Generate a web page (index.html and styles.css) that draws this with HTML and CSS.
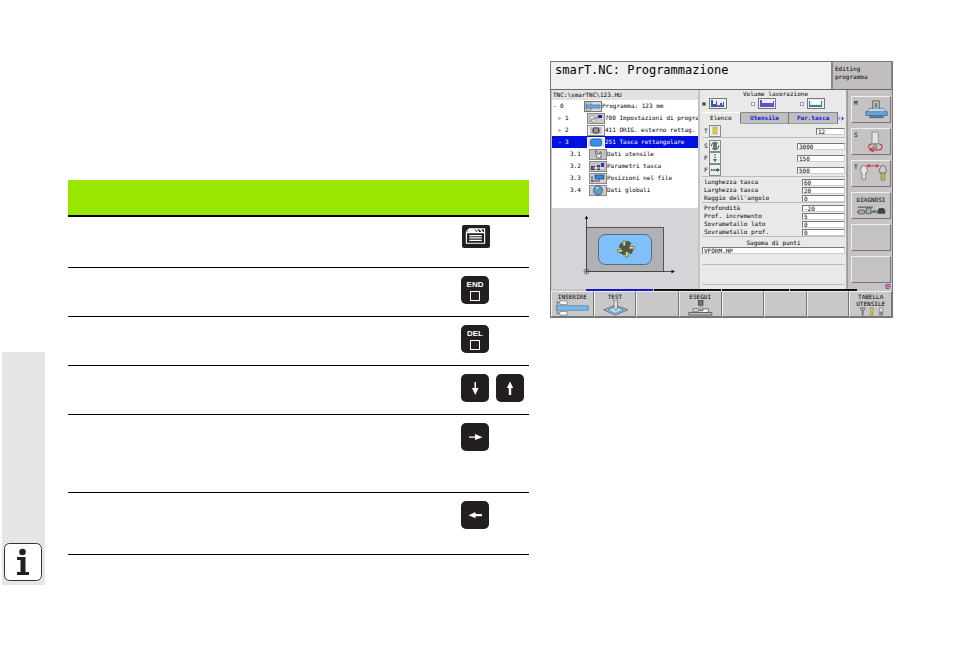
FILE: index.html
```html
<!DOCTYPE html>
<html lang="it">

<head>
    <meta charset="UTF-8">
    <meta name="viewport" content="width=device-width, initial-scale=1.0">
    <title>smarT.NC: Programmazione</title>
    <link rel="stylesheet" href="styles.css">
</head>

<body>
    <div class="page">
        <aside class="side">
            <svg class="info" viewBox="0 0 38 38">
                <rect x="0.5" y="0.5" width="37" height="37" rx="5" fill="#fff" stroke="#333" />
                <circle cx="18.500" cy="9" r="3.300" fill="#231f20" />
                <path d="M13 14h8.500v15h3.500v3H13v-3h3.500V17H13z" fill="#231f20" />
            </svg>
        </aside>

        <!-- keys -->
        <table class="keys">
            <thead>
                <tr>
                    <th></th>
                    <th class="key-col"></th>
                </tr>
            </thead>
            <tbody>
                <tr class="row-first">
                    <td></td>
                    <td>
                        <button class="key key-menu" aria-label="Menu">
                            <svg viewBox="0 0 28 24">
                                <path d="M4 7l3-3h16v4M4 7v12h19V8H4" fill="none" stroke="#fff" stroke-width="1.200" />
                                <path d="M7 4h5l3 4H5z" fill="#fff" />
                                <path d="M14 4l3 4M18 4l3 4" stroke="#fff" stroke-width="1.500" />
                                <path d="M7 11h13M7 13.500h13M7 16h13" stroke="#fff" stroke-width="1.300" />
                            </svg>
                        </button>
                    </td>
                </tr>
                <tr>
                    <td></td>
                    <td><button class="key">END<span class="square"></span></button></td>
                </tr>
                <tr>
                    <td></td>
                    <td><button class="key">DEL<span class="square"></span></button></td>
                </tr>
                <tr>
                    <td></td>
                    <td>
                        <div class="key-pair">
                            <button class="key" aria-label="Freccia in basso">
                                <svg viewBox="0 0 28 28"><path d="M13.500 8h1.500v6h2.500l-3.200 7-3.300-7h2.500z" fill="#fff" /></svg>
                            </button>
                            <button class="key" aria-label="Freccia in alto">
                                <svg viewBox="0 0 28 28"><path d="M12.800 21h2.400v-7h2L14 7.500 10.800 14h2z" fill="#fff" /></svg>
                            </button>
                        </div>
                    </td>
                </tr>
                <tr class="row-tall">
                    <td></td>
                    <td>
                        <button class="key" aria-label="Freccia a destra">
                            <svg viewBox="0 0 28 28"><path d="M8 13.500h6V11l7.500 3.200L14 17v-2.200H8z" fill="#fff" /></svg>
                        </button>
                    </td>
                </tr>
                <tr class="row-last">
                    <td></td>
                    <td>
                        <button class="key" aria-label="Freccia a sinistra">
                            <svg viewBox="0 0 28 28"><path d="M21 13h-6.500v-2L7.500 14.200l7 3V15.300H21z" fill="#fff" /></svg>
                        </button>
                    </td>
                </tr>
            </tbody>
        </table>

        <!-- control screen -->
        <main class="screen">
            <header class="top">
                <h1>smarT.NC: Programmazione</h1>
                <div class="mode">Editing<br>programma</div>
            </header>

            <div class="middle">
                <section class="program">
                    <div class="path">TNC:\smarTNC\123.HU</div>
                    <ul class="tree">
                        <li>
                            <span class="exp">-</span><span class="num">0</span>
                            <svg class="icon" viewBox="0 0 18 11">
                                <rect x="0.500" y="0.500" width="17" height="10" fill="#d8d8d8" stroke="#777" />
                                <path d="M2 2h5v2H2zM2 7h5v2H2z" fill="#fff" stroke="#456" stroke-width="0.600" />
                                <path d="M2 4h14v3H2z" fill="#6ab4ee" stroke="#357" stroke-width="0.600" />
                            </svg>
                            <span class="name">Programma: 123 mm</span>
                        </li>
                        <li class="level1">
                            <span class="exp">▹</span><span class="num">1</span>
                            <svg class="icon" viewBox="0 0 18 11">
                                <rect x="0.500" y="0.500" width="17" height="10" fill="#c8c8c8" stroke="#888" />
                                <path d="M2 8h4V5h5V3" fill="none" stroke="#777" stroke-width="0.700" />
                                <path d="M3 3h4v3H3zM5 6h4v3H5z" fill="#eee" stroke="#777" stroke-width="0.500" />
                                <rect x="11" y="2" width="4" height="3" fill="#2222b0" />
                            </svg>
                            <span class="name">700 Impostazioni di programma</span>
                        </li>
                        <li class="level1">
                            <span class="exp">▹</span><span class="num">2</span>
                            <svg class="icon" viewBox="0 0 18 11">
                                <rect x="0.500" y="0.500" width="17" height="10" fill="#eee" stroke="#888" />
                                <rect x="3" y="2" width="12" height="7" fill="#c4c4c4" />
                                <rect x="6" y="3" width="6" height="5" rx="1.500" fill="#777" stroke="#222" />
                                <path d="M8 3v5M10 3v5" stroke="#ddd" stroke-width="0.600" />
                            </svg>
                            <span class="name">411 ORIG. esterno rettag.</span>
                        </li>
                        <li class="level1 selected">
                            <span class="exp">-</span><span class="num">3</span>
                            <svg class="icon" viewBox="0 0 18 11">
                                <rect x="0.500" y="0.500" width="17" height="10" fill="#ddd" stroke="#fff" />
                                <rect x="3.500" y="2" width="11" height="7" rx="2" fill="#2f94f0" stroke="#136" stroke-width="0.600" />
                            </svg>
                            <span class="name">251 Tasca rettangolare</span>
                        </li>
                        <li class="level2">
                            <span class="num">3.1</span>
                            <svg class="icon" viewBox="0 0 18 11">
                                <rect x="0.500" y="0.500" width="17" height="10" fill="#c2c2c2" stroke="#888" />
                                <path d="M6 2h2v3h3V3h1v6H8z" fill="#eee" stroke="#444" stroke-width="0.700" />
                            </svg>
                            <span class="name">Dati utensile</span>
                        </li>
                        <li class="level2">
                            <span class="num">3.2</span>
                            <svg class="icon" viewBox="0 0 18 11">
                                <rect x="0.500" y="0.500" width="17" height="10" fill="#c2c2c2" stroke="#888" />
                                <path d="M2 5h4v4H2zM8 4h3v5H8z" fill="#446" />
                                <path d="M12 2h3v4h-3z" fill="#33c" />
                                <path d="M4 7h11" stroke="#eee" />
                            </svg>
                            <span class="name">Parametri tasca</span>
                        </li>
                        <li class="level2">
                            <span class="num">3.3</span>
                            <svg class="icon" viewBox="0 0 18 11">
                                <rect x="0.500" y="0.500" width="17" height="10" fill="#d0d0d0" stroke="#888" />
                                <rect x="6" y="2" width="9" height="4" fill="#2b8be8" stroke="#136" stroke-width="0.600" />
                                <path d="M3 3v6M2 8h7M10 6v3" stroke="#335" stroke-width="0.900" />
                            </svg>
                            <span class="name">Posizioni nel file</span>
                        </li>
                        <li class="level2">
                            <span class="num">3.4</span>
                            <svg class="icon" viewBox="0 0 18 11">
                                <rect x="0.500" y="0.500" width="17" height="10" fill="#ccc" stroke="#888" />
                                <circle cx="9" cy="5.500" r="4.600" fill="#5a92dc" stroke="#236" stroke-width="0.500" />
                                <path d="M6 3l3-1 1 2-2 2-2-1zM10 6l3-1-1 3-2 1z" fill="#5cba68" />
                                <path d="M7 2l3 0-2 2z" fill="#e8f4ff" />
                            </svg>
                            <span class="name">Dati globali</span>
                        </li>
                    </ul>
                    <div class="graphic">
                        <svg viewBox="0 0 146 80">
                            <rect x="34.500" y="19.500" width="77" height="44" fill="#b2b0b2" stroke="#555" />
                            <rect x="46.500" y="26.500" width="53" height="30" rx="7" fill="#82c0fa" stroke="#456" stroke-width="0.800" />
                            <path d="M34.500 65V9M33 63.500h88" stroke="#444" stroke-width="0.900" />
                            <path d="M34.500 7.500l1.700 3.500h-3.400zM123 63.500l-3.500-1.700v3.400z" fill="#111" />
                            <circle cx="34.500" cy="63.500" r="2.500" fill="none" stroke="#555" stroke-width="0.700" />
                            <g stroke="#333" stroke-width="0.500">
                                <path d="M73 38l2-5 4 2-2 4 4 3-2 4-4-3-3 4-5-3 3-3-3-2 2-4z" fill="#555" />
                                <path d="M71 33h2.500v5H71zM77 38.500h5V41h-5zM73.500 43.500H76V49h-2.500zM65.500 41.500h5V44h-5z" fill="#f2e53c" />
                            </g>
                        </svg>
                    </div>
                </section>

                <form class="form">
                    <fieldset class="volume">
                        <legend>Volume lavorazione</legend>
                        <label><input type="radio" name="volume" aria-label="Volume 1" checked>
                            <svg class="icon" viewBox="0 0 18 11">
                                <rect x="0.500" y="0.500" width="17" height="10" fill="#eee" stroke="#777" />
                                <path d="M2 2h2v4h3V3h1v4h3V5h2v2h1V4h1v5H2z" fill="#2d6098" />
                                <path d="M7 7h5v2H7z" fill="#6b4dcc" />
                            </svg>
                        </label>
                        <label><input type="radio" name="volume" aria-label="Volume 2">
                            <svg class="icon" viewBox="0 0 18 11">
                                <rect x="0.500" y="0.500" width="17" height="10" fill="#eee" stroke="#777" />
                                <path d="M2 2h2v3h11V3h1v6H2z" fill="#6050cf" />
                            </svg>
                        </label>
                        <label><input type="radio" name="volume" aria-label="Volume 3">
                            <svg class="icon" viewBox="0 0 18 11">
                                <rect x="0.500" y="0.500" width="17" height="10" fill="#eee" stroke="#777" />
                                <path d="M2 3h1v4h11V3h1v6H2z" fill="#208c98" />
                                <path d="M5 2h8v4H5z" fill="#fff" />
                            </svg>
                        </label>
                    </fieldset>

                    <div class="tabs">
                        <button type="button" class="tab active">Elenco</button>
                        <button type="button" class="tab">Utensile</button>
                        <button type="button" class="tab">Par.tasca</button>
                        <span class="arrows">
                            <svg viewBox="0 0 8 6"><path d="M3 0v6L0 3z" fill="#8a90d8" /><path d="M5 0v6l3-3z" fill="#2a35d8" /></svg>
                        </span>
                    </div>

                    <div class="group">
                        <div class="line">
                            <label for="tool">T</label>
                            <svg class="pic" viewBox="0 0 12 12">
                                <rect x="0.500" y="0.500" width="11" height="11" fill="#eee" stroke="#888" />
                                <rect x="4" y="2" width="4" height="7" fill="#e2cb40" stroke="#986" stroke-width="0.500" />
                            </svg>
                            <input class="value short" id="tool" type="text" value="12">
                        </div>
                    </div>
                    <div class="group feeds">
                        <div class="line">
                            <label for="speed">S</label>
                            <svg class="pic" viewBox="0 0 12 12">
                                <rect x="0.500" y="0.500" width="11" height="11" fill="#eee" stroke="#888" />
                                <circle cx="6" cy="6" r="3.700" fill="none" stroke="#187838" stroke-dasharray="9 2" />
                                <path d="M4.500 3.500h3v5h-3z" fill="#777" stroke="#333" stroke-width="0.500" />
                            </svg>
                            <input class="value long" id="speed" type="text" value="3000">
                        </div>
                        <div class="line">
                            <label for="feed-z">F</label>
                            <svg class="pic" viewBox="0 0 12 12">
                                <rect x="0.500" y="0.500" width="11" height="11" fill="#eee" stroke="#888" />
                                <path d="M6 2v5" stroke="#187838" stroke-dasharray="1.500 1" stroke-width="1.200" />
                                <path d="M4 7h4L6 10z" fill="#187838" />
                            </svg>
                            <input class="value long" id="feed-z" type="text" value="150">
                        </div>
                        <div class="line">
                            <label for="feed">F</label>
                            <svg class="pic" viewBox="0 0 12 12">
                                <rect x="0.500" y="0.500" width="11" height="11" fill="#eee" stroke="#888" />
                                <path d="M2 6h6" stroke="#187838" stroke-dasharray="1.500 0.800" stroke-width="1.800" />
                                <path d="M8 4v4l3-2z" fill="#187838" />
                            </svg>
                            <input class="value long" id="feed" type="text" value="500">
                        </div>
                    </div>
                    <div class="group">
                        <div class="field"><label for="length">lunghezza tasca</label><input class="value" id="length" type="text" value="60"></div>
                        <div class="field"><label for="width">Larghezza tasca</label><input class="value" id="width" type="text" value="20"></div>
                        <div class="field"><label for="radius">Raggio dell'angolo</label><input class="value" id="radius" type="text" value="0"></div>
                    </div>
                    <div class="group">
                        <div class="field"><label for="depth">Profondità</label><input class="value" id="depth" type="text" value="-20"></div>
                        <div class="field"><label for="step">Prof. incremento</label><input class="value" id="step" type="text" value="5"></div>
                        <div class="field"><label for="side">Sovrametallo lato</label><input class="value" id="side" type="text" value="0"></div>
                        <div class="field"><label for="bottom">Sovrametallo prof.</label><input class="value" id="bottom" type="text" value="0"></div>
                    </div>
                    <div class="group points">
                        <label for="points">Sagoma di punti</label>
                        <input class="value full" id="points" type="text" value="VFORM.HP">
                    </div>
                    <div class="group rest"></div>
                </form>

                <nav class="modes">
                    <button class="mode-key">
                        <span class="letter">M</span>
                        <svg viewBox="0 0 40 27">
                            <path d="M21 4h7v10h-7z" fill="#ddd" stroke="#444" />
                            <path d="M23 6h3v5h-3z" fill="#777" />
                            <path d="M15 15l3-3h14l3 3v5H15z" fill="#b9dcf5" stroke="#456" stroke-width="0.700" />
                            <path d="M13 16h24v4H13z" fill="#69a9e2" stroke="#357" stroke-width="0.700" />
                            <path d="M17 22h16" stroke="#567" stroke-width="2" />
                        </svg>
                    </button>
                    <button class="mode-key">
                        <span class="letter">S</span>
                        <svg viewBox="0 0 40 27">
                            <path d="M20 3h7v13h-7z" fill="#e2e2e2" stroke="#777" stroke-width="0.800" />
                            <path d="M22 16h3v6h-3z" fill="#aaa" stroke="#555" stroke-width="0.600" />
                            <path d="M20 16c-5 1-5 6 1 7h6c6-1 5-6 1-7M21 20l-3 3 4 2" fill="none" stroke="#c83232" stroke-width="1.200" />
                        </svg>
                    </button>
                    <button class="mode-key">
                        <span class="letter">T</span>
                        <svg viewBox="0 0 40 27">
                            <path d="M9 5h4l2 5-1 3h-1v7h-4v-7H8l-1-3z" fill="#e5e5e5" stroke="#666" stroke-width="0.800" />
                            <path d="M30 5h4l2 5-1 3h-6l-1-3z" fill="#ccc" stroke="#555" stroke-width="0.800" />
                            <path d="M30 13h4v8h-4z" fill="#c8b84c" stroke="#665" stroke-width="0.600" />
                            <path d="M15 5h11" stroke="#e02020" />
                            <path d="M17 3v4l-3-2zM25 3v4l3-2z" fill="#e02020" />
                        </svg>
                    </button>
                    <button class="mode-key diagnosis">
                        <span>DIAGNOSI</span>
                        <svg viewBox="0 0 40 12">
                            <path d="M6 3h16M5 8h22" stroke="#444" />
                            <path d="M7 6h6v4H7zM15 4h5v6h-5z" fill="#aaa" stroke="#444" stroke-width="0.700" />
                            <path d="M22 6h3v3h-3z" fill="#477f99" />
                            <path d="M27 10V6l2-2h4l2 2v4z" fill="#444" />
                        </svg>
                    </button>
                    <button class="mode-key" aria-label="Libero"></button>
                    <button class="mode-key" aria-label="Libero"></button>
                    <svg class="mark" viewBox="0 0 6 5"><path d="M1 0h4l1 2-2 3H1L0 2z" fill="#a33a94" /><path d="M1 1l4 3M5 1L1 4" stroke="#eec" stroke-width="0.600" /></svg>
                </nav>
            </div>

            <footer class="bottom">
                <div class="banks"><span class="bank current"></span><span class="bank"></span><span class="bank"></span><span class="bank"></span></div>
                <div class="softkeys">
                    <button class="softkey">INSERIRE
                        <svg viewBox="0 0 40 18">
                            <path d="M3 1v15M3 3h3M3 9h3M3 15h3" stroke="#555" stroke-width="0.700" />
                            <path d="M6 1h8v4H6zM6 13h8v4H6z" fill="#fff" stroke="#555" stroke-width="0.600" />
                            <path d="M2 6.500h36v5H2z" fill="#74bbf2" stroke="#467" stroke-width="0.600" />
                        </svg>
                    </button>
                    <button class="softkey">TEST
                        <svg viewBox="0 0 40 18">
                            <path d="M7 11l13-5 14 5-14 6z" fill="#8bc4ee" stroke="#456" stroke-width="0.800" />
                            <path d="M12 11l8-3 9 3-9 4z" fill="#bde1f5" stroke="#467" stroke-width="0.600" />
                            <path d="M18.500 0h4v9l-2 3-2-3z" fill="#ddd" stroke="#555" stroke-width="0.700" />
                        </svg>
                    </button>
                    <button class="softkey" aria-label="Libero"></button>
                    <button class="softkey">ESEGUI
                        <svg viewBox="0 0 40 18">
                            <path d="M18 0h5v6h-5z" fill="#777" stroke="#444" />
                            <path d="M20 6h2v5h-2z" fill="#ddd" stroke="#555" stroke-width="0.500" />
                            <path d="M12 10h6v2h5v-2h6v4H12z" fill="#fff" stroke="#444" stroke-width="0.800" />
                            <path d="M13 12h5v2h-5z" fill="#55a8e8" />
                            <path d="M7 14h26v3H7z" fill="#bbb" stroke="#444" stroke-width="0.800" />
                        </svg>
                    </button>
                    <button class="softkey" aria-label="Libero"></button>
                    <button class="softkey" aria-label="Libero"></button>
                    <button class="softkey" aria-label="Libero"></button>
                    <button class="softkey two-lines">TABELLA<br>UTENSILE
                        <svg viewBox="0 0 40 10">
                            <path d="M9 1h5l-1 3h-1v5h-1V4h-1z" fill="#bbb" stroke="#444" stroke-width="0.700" />
                            <path d="M20 1h3v3l-1 1 1 4h-3l1-4-1-1z" fill="#f0d43c" stroke="#764" stroke-width="0.600" />
                            <path d="M30 1h4v8h-4z" fill="#ddd" stroke="#666" stroke-width="0.600" />
                            <path d="M30 5h4v4h-4z" fill="#7b8c6c" />
                        </svg>
                    </button>
                </div>
            </footer>
        </main>
    </div>
</body>

</html>
```
FILE: styles.css
```css
* {
    box-sizing: border-box;
}

body {
    margin: 0;
    background: #fff;
    font-family: "Liberation Sans", Arial, sans-serif;
}

svg {
    display: block;
}

button {
    margin: 0;
    padding: 0;
    border: none;
    font: inherit;
    color: inherit;
}

.page {
    display: grid;
    grid-template-columns: 43px minmax(0, 505fr) minmax(0, 343fr);
    align-items: start;
    padding: 0 61px 0 2px;
}

/* left strip */
.side {
    display: flex;
    align-items: flex-end;
    height: 233px;
    margin-top: 352px;
    padding: 0 0 4px 2px;
    background: #e6e6e6;
}

.info {
    width: 38px;
    height: 38px;
}

/* keys table */
.keys {
    margin: 180px 21px 0 23px;
    border-spacing: 0;
    table-layout: fixed;
}

.keys th {
    height: 37px;
    background: #99e600;
    border-bottom: 2px solid #000;
}

.keys .key-col {
    width: 68px;
}

.keys td {
    height: 49px;
    padding: 8px 0 0;
    border-bottom: 1px solid #000;
    vertical-align: top;
}

.keys .row-first td {
    height: 51px;
}

.keys .row-tall td {
    height: 78px;
}

.keys .row-last td {
    height: 62px;
}

.key {
    display: flex;
    flex-direction: column;
    align-items: center;
    justify-content: center;
    gap: 2px;
    width: 28px;
    height: 28px;
    border-radius: 5px;
    background: #231f20;
    color: #fff;
    font-size: 8px;
    font-weight: bold;
    line-height: 9px;
}

.key svg {
    width: 100%;
}

.key-menu {
    height: 23px;
    margin-left: 1px;
    border-radius: 2px;
}

.key-pair {
    display: flex;
    gap: 7px;
}

.square {
    width: 10px;
    height: 10px;
    border: 1px solid #fff;
}

/* control screen */
.screen {
    margin-top: 61px;
    border: 1px solid #777;
    background: #c6c4c4;
    color: #000;
    font-family: "DejaVu Sans Mono", monospace;
    font-size: 6px;
    line-height: 8px;
}

.top {
    display: flex;
    height: 28px;
    border-bottom: 1px solid #666;
}

.top h1 {
    flex: 1;
    margin: 0;
    padding-left: 4px;
    background: #f0f0f0;
    font-size: 12px;
    font-weight: normal;
    line-height: 16px;
}

.mode {
    width: 61px;
    padding: 3px 2px;
    border: 1px solid #888;
    border-width: 0 1px 0 2px;
    background: #c2bebf;
}

.middle {
    display: flex;
    height: 199px;
}

.program {
    display: flex;
    flex: 1;
    flex-direction: column;
    min-width: 0;
    padding-left: 1px;
}

.path {
    height: 10px;
    padding-left: 1px;
    background: #e2e2e2;
    line-height: 10px;
}

.tree {
    height: 108px;
    margin: 0;
    padding: 0;
    background: #fff;
    list-style: none;
}

.tree li {
    display: flex;
    align-items: center;
    height: 12px;
    padding-left: 1px;
    overflow: hidden;
    white-space: nowrap;
}

.exp {
    flex: none;
    width: 7px;
}

.num {
    flex: none;
    width: 24px;
}

.icon {
    flex: none;
    width: 18px;
    height: 11px;
}

.tree .level1 {
    padding-left: 6px;
}

.tree .level1 .num {
    width: 22px;
}

.tree .level2 {
    padding-left: 18px;
}

.tree .level2 .num {
    width: 19px;
}

.tree .selected {
    background: #0010e0;
    color: #fff;
}

.graphic {
    flex: 1;
    background: #d5d4d9;
}

.graphic svg {
    width: 100%;
    height: 80px;
}

.form {
    width: 147px;
    margin-left: 2px;
    padding: 0 1px 0 2px;
    background: #e9e9e9;
    border-right: 1px solid #aaa;
}

.volume {
    display: grid;
    grid-template-columns: repeat(3, 49px);
    margin: 0;
    padding: 0;
    border: none;
}

.volume legend {
    width: 100%;
    padding: 0;
    text-align: center;
}

.volume label {
    display: flex;
    align-items: center;
    gap: 3px;
    height: 11px;
}

.volume input {
    appearance: none;
    width: 4px;
    height: 4px;
    margin: 0;
    border: 1px solid #999;
    background: #fff;
}

.volume input:checked {
    background: #333;
}

.tabs {
    display: flex;
    height: 12px;
    margin-top: 3px;
}

.tab {
    flex: 48;
    border-top: 1px solid #888;
    border-right: 1px solid #777;
    border-bottom: 1px solid #999;
    background: #c0bfc0;
    color: #1418d8;
    font-weight: bold;
}

.tab.active {
    flex: 38;
    border-top-color: #fff;
    border-bottom-color: #e9e9e9;
    background: #e9e9e9;
    color: #000;
    font-weight: normal;
}

.arrows {
    display: flex;
    align-items: center;
    width: 7px;
}

.arrows svg {
    width: 6px;
    height: 5px;
}

.group {
    padding: 1px 0 0 2px;
    border-bottom: 1px solid #bbb;
}

.feeds {
    padding-top: 2px;
}

.line,
.field {
    display: flex;
    align-items: center;
    justify-content: space-between;
}

.line {
    height: 12px;
}

.line label {
    width: 5px;
}

.field {
    height: 8px;
}

.pic {
    width: 12px;
    height: 12px;
    margin-right: auto;
}

.value {
    width: 43px;
    height: 7px;
    padding: 0 0 0 1px;
    border: 1px solid #777;
    border-right-color: #ccc;
    border-bottom-color: #ccc;
    border-radius: 0;
    background: #fff;
    color: #000;
    font: inherit;
    line-height: 5px;
}

.value.short {
    width: 29px;
}

.value.long {
    width: 48px;
}

.value.full {
    width: 100%;
}

.points {
    display: flex;
    flex-direction: column;
    height: 28px;
    padding: 2px 0 0;
    text-align: center;
}

.rest {
    height: 20px;
}

.modes {
    display: flex;
    flex-direction: column;
    gap: 5px;
    width: 45px;
    padding: 6px 1px 0 3px;
    border-left: 1px solid #999;
    background: #c6c2c4;
}

.mode-key {
    display: flex;
    flex: none;
    height: 27px;
    border: 1px solid #eee;
    border-right-color: #777;
    border-bottom-color: #777;
    background: #c4c2c2;
}

.mode-key svg {
    width: 100%;
}

.letter {
    width: 0;
    padding: 2px 0 0 2px;
    white-space: nowrap;
}

.diagnosis {
    flex-direction: column;
    align-items: center;
    padding-top: 3px;
}

.mark {
    flex: none;
    width: 6px;
    height: 5px;
    margin: -4px 0 0 auto;
}

.mode-key.diagnosis svg {
    height: 12px;
}

/* soft keys */
.banks {
    display: flex;
    gap: 1px;
    height: 2px;
    padding: 0 35px;
}

.bank {
    flex: 1;
    background: #111;
}

.bank.current {
    background: #1a14cc;
}

.softkeys {
    display: grid;
    grid-template-columns: repeat(8, 1fr);
    height: 26px;
}

.softkey {
    display: flex;
    flex-direction: column;
    align-items: center;
    padding-top: 1px;
    border: 1px solid #eee;
    border-right-color: #777;
    border-bottom-color: #777;
    background: #c8c8c8;
    line-height: 7px;
    white-space: nowrap;
}

.softkey svg {
    width: 100%;
    height: 16px;
}

.two-lines svg {
    height: 9px;
}
```
